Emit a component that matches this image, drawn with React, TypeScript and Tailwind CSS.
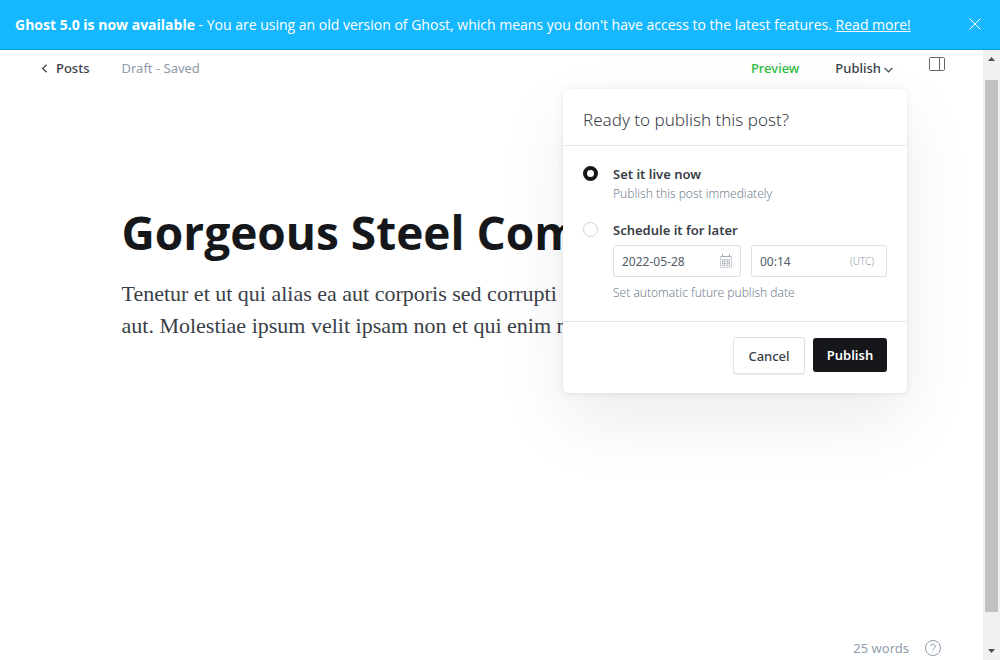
import { useState } from "react";

function Banner({ onClose }: { onClose: () => void }) {
  return (
    <aside className="flex h-[50px] shrink-0 items-center justify-between border-b border-[#0e9fe0] bg-[#15b8ff] pl-[15px] pr-[18px] font-['Open_Sans','Noto_Sans',sans-serif] text-[14px] leading-5 text-white">
      <p>
        <strong className="font-bold">Ghost 5.0 is now available</strong> - You are using an old version of Ghost,
        which means you don't have access to the latest features.{" "}
        <a href="#upgrade" className="underline">
          Read more!
        </a>
      </p>
      <button type="button" aria-label="Close" onClick={onClose} className="mb-[2px]">
        <svg width="14" height="14" viewBox="0 0 14 14" fill="none" stroke="currentColor" strokeWidth="1">
          <path d="M1.5 1.5l11 11M12.5 1.5l-11 11" />
        </svg>
      </button>
    </aside>
  );
}

function CalendarIcon() {
  return (
    <svg width="12" height="14" viewBox="0 0 12 14" fill="none" stroke="#a3adb8" strokeWidth="1" className="shrink-0">
      <path d="M0.5 2.5h11v11h-11z" strokeOpacity="0.6" />
      <path d="M2.5 0v3M9.5 0v3M1 2.5h10" />
      <path d="M2 5.5h8M2 7.5h8M2 9.5h8M2 11.5h8M2.5 5v7M4.5 5v7M7.5 5v7M9.5 5v7" strokeOpacity="0.6" />
    </svg>
  );
}

const radioClass =
  "mt-[2px] size-[15px] shrink-0 appearance-none rounded-full border border-[#ced4d9] bg-white checked:border-4 checked:border-[#15171a]";

function PublishMenu() {
  const [mode, setMode] = useState("now");
  return (
    <form
      onSubmit={(e) => e.preventDefault()}
      className="absolute top-full right-0 z-10 mt-2 w-[344px] rounded-[5px] bg-white text-[13px] text-[#394047] shadow-[0_0_7px_rgba(0,0,0,0.08),0_2px_2px_rgba(0,0,0,0.02),0_28px_70px_rgba(0,0,0,0.08)]"
    >
      <h2 className="border-b border-[#e6e9eb] px-5 pt-[19px] pb-[13px] text-[17px] leading-6 font-light">
        Ready to publish this post?
      </h2>
      <div className="flex flex-col gap-4 border-b border-[#e6e9eb] px-5 py-[18px]">
        <div className="flex gap-[15px]">
          <input
            id="live-now"
            type="radio"
            name="publish-time"
            checked={mode === "now"}
            onChange={() => setMode("now")}
            className={radioClass}
          />
          <div>
            <label htmlFor="live-now" className="block leading-5 font-semibold">
              Set it live now
            </label>
            <p className="text-[12px] leading-5 font-light text-[#738394]">Publish this post immediately</p>
          </div>
        </div>
        <div className="flex gap-[15px]">
          <input
            id="schedule"
            type="radio"
            name="publish-time"
            checked={mode === "later"}
            onChange={() => setMode("later")}
            className={radioClass}
          />
          <div className="grow">
            <label htmlFor="schedule" className="block leading-5 font-semibold">
              Schedule it for later
            </label>
            <div className="mt-[5px] flex gap-[10px]">
              <div className="flex h-8 w-32 items-center rounded-[3px] border border-[#dddfe1] px-2">
                <input
                  aria-label="Publish date"
                  defaultValue="2022-05-28"
                  className="w-full min-w-0 pt-[2px] text-[12px] leading-5 text-[#525c66] outline-none"
                />
                <CalendarIcon />
              </div>
              <div className="flex h-8 grow basis-0 items-center rounded-[3px] border border-[#dddfe1] pr-3 pl-2">
                <input
                  aria-label="Publish time"
                  defaultValue="00:14"
                  className="w-full min-w-0 pt-[2px] text-[12px] leading-5 text-[#525c66] outline-none"
                />
                <span className="text-[10px] font-light text-[#8e9cac]">(UTC)</span>
              </div>
            </div>
            <p className="mt-[6px] text-[12px] leading-5 font-light text-[#738394]">Set automatic future publish date</p>
          </div>
        </div>
      </div>
      <div className="flex justify-end gap-2 px-5 pt-[15px] pb-[19px]">
        <button
          type="button"
          className="h-[37px] w-[72px] rounded-[3px] border border-[#dde1e5] font-medium shadow-[0_1px_1px_rgba(0,0,0,0.08)]"
        >
          Cancel
        </button>
        <button type="submit" className="mt-px h-[34px] w-[74px] rounded-[3px] bg-[#15171a] font-semibold text-white">
          Publish
        </button>
      </div>
    </form>
  );
}

function Toolbar() {
  return (
    <header className="flex items-start justify-between pr-[38px] pl-[41px] text-[13px] leading-5">
      <div className="flex gap-8 pt-[8px]">
        <a href="#posts" className="flex items-center gap-2 font-medium text-[#394047]">
          <svg width="7" height="9" viewBox="0 0 7 9" fill="none" stroke="currentColor" strokeWidth="1.2">
            <path d="M5.6 0.8L1.6 4.5l4 3.7" />
          </svg>
          Posts
        </a>
        <span className="text-[#8e9cac]">Draft - Saved</span>
      </div>
      <div className="flex gap-[22px]">
        <button type="button" className="mt-[8px] h-5 font-medium text-[#2cbb3e]">
          Preview
        </button>
        <div className="relative pt-[8px] pr-[14px] pb-[3px] pl-[14px]">
          <button type="button" aria-expanded="true" className="flex items-center gap-[3px] font-medium text-[#394047]">
            Publish
            <svg width="9" height="6" viewBox="0 0 9 6" fill="none" stroke="currentColor" strokeWidth="1.2" className="mt-1">
              <path d="M0.6 0.9l3.9 4 3.9-4" />
            </svg>
          </button>
          <PublishMenu />
        </div>
        <button type="button" aria-label="Settings" className="mt-[7px] self-start text-[#5f676f]">
          <svg width="16" height="14" viewBox="0 0 16 14" fill="none" stroke="currentColor" strokeWidth="1">
            <rect x="0.5" y="0.5" width="15" height="13" rx="1" />
            <path d="M10.5 0.5v13" />
          </svg>
        </button>
      </div>
    </header>
  );
}

function Scrollbar() {
  return (
    <div aria-hidden="true" className="flex w-[17px] shrink-0 flex-col items-center bg-[#f1f1f1]">
      <svg width="17" height="30" viewBox="0 0 17 30" fill="#505050">
        <path d="M5 11l3.5-4 3.5 4z" />
      </svg>
      <div className="w-[13px] grow bg-[#c1c1c1]" />
      <svg width="17" height="48" viewBox="0 0 17 48" fill="#505050">
        <path d="M5 37l3.5 4 3.5-4z" />
      </svg>
    </div>
  );
}

export default function App() {
  const [bannerOpen, setBannerOpen] = useState(true);
  return (
    <div className="flex min-h-screen flex-col bg-white font-['Noto_Sans','Open_Sans',sans-serif]">
      {bannerOpen && <Banner onClose={() => setBannerOpen(false)} />}
      <div className="flex grow">
        <div className="flex min-w-0 grow flex-col">
          <Toolbar />
          <main className="mx-auto w-full max-w-[740px] grow pt-[124px]">
            <h1 className="font-['Open_Sans','Noto_Sans',sans-serif] text-[46px] leading-[54px] font-bold text-[#15171a]">
              Gorgeous Steel Com
            </h1>
            <p className="mt-[19px] font-['Liberation_Serif',serif] text-[22px] leading-8 text-[#394047]">
              Tenetur et ut qui alias ea aut corporis sed corrupti
              <br />
              aut. Molestiae ipsum velit ipsam non et qui enim n
            </p>
          </main>
          <footer className="flex items-center justify-end gap-4 pr-[42px] pb-1 text-[13px] leading-4 text-[#8e9cac]">
            <span>25 words</span>
            <a href="#help" aria-label="Help">
              <svg width="16" height="16" viewBox="0 0 16 16" fill="none" stroke="currentColor" strokeWidth="1">
                <circle cx="8" cy="8" r="7.5" />
                <path d="M5.8 6.3a2.2 2.2 0 1 1 3.2 2c-.7.4-1 .7-1 1.6M8 11.2v1" />
              </svg>
            </a>
          </footer>
        </div>
        <Scrollbar />
      </div>
    </div>
  );
}
